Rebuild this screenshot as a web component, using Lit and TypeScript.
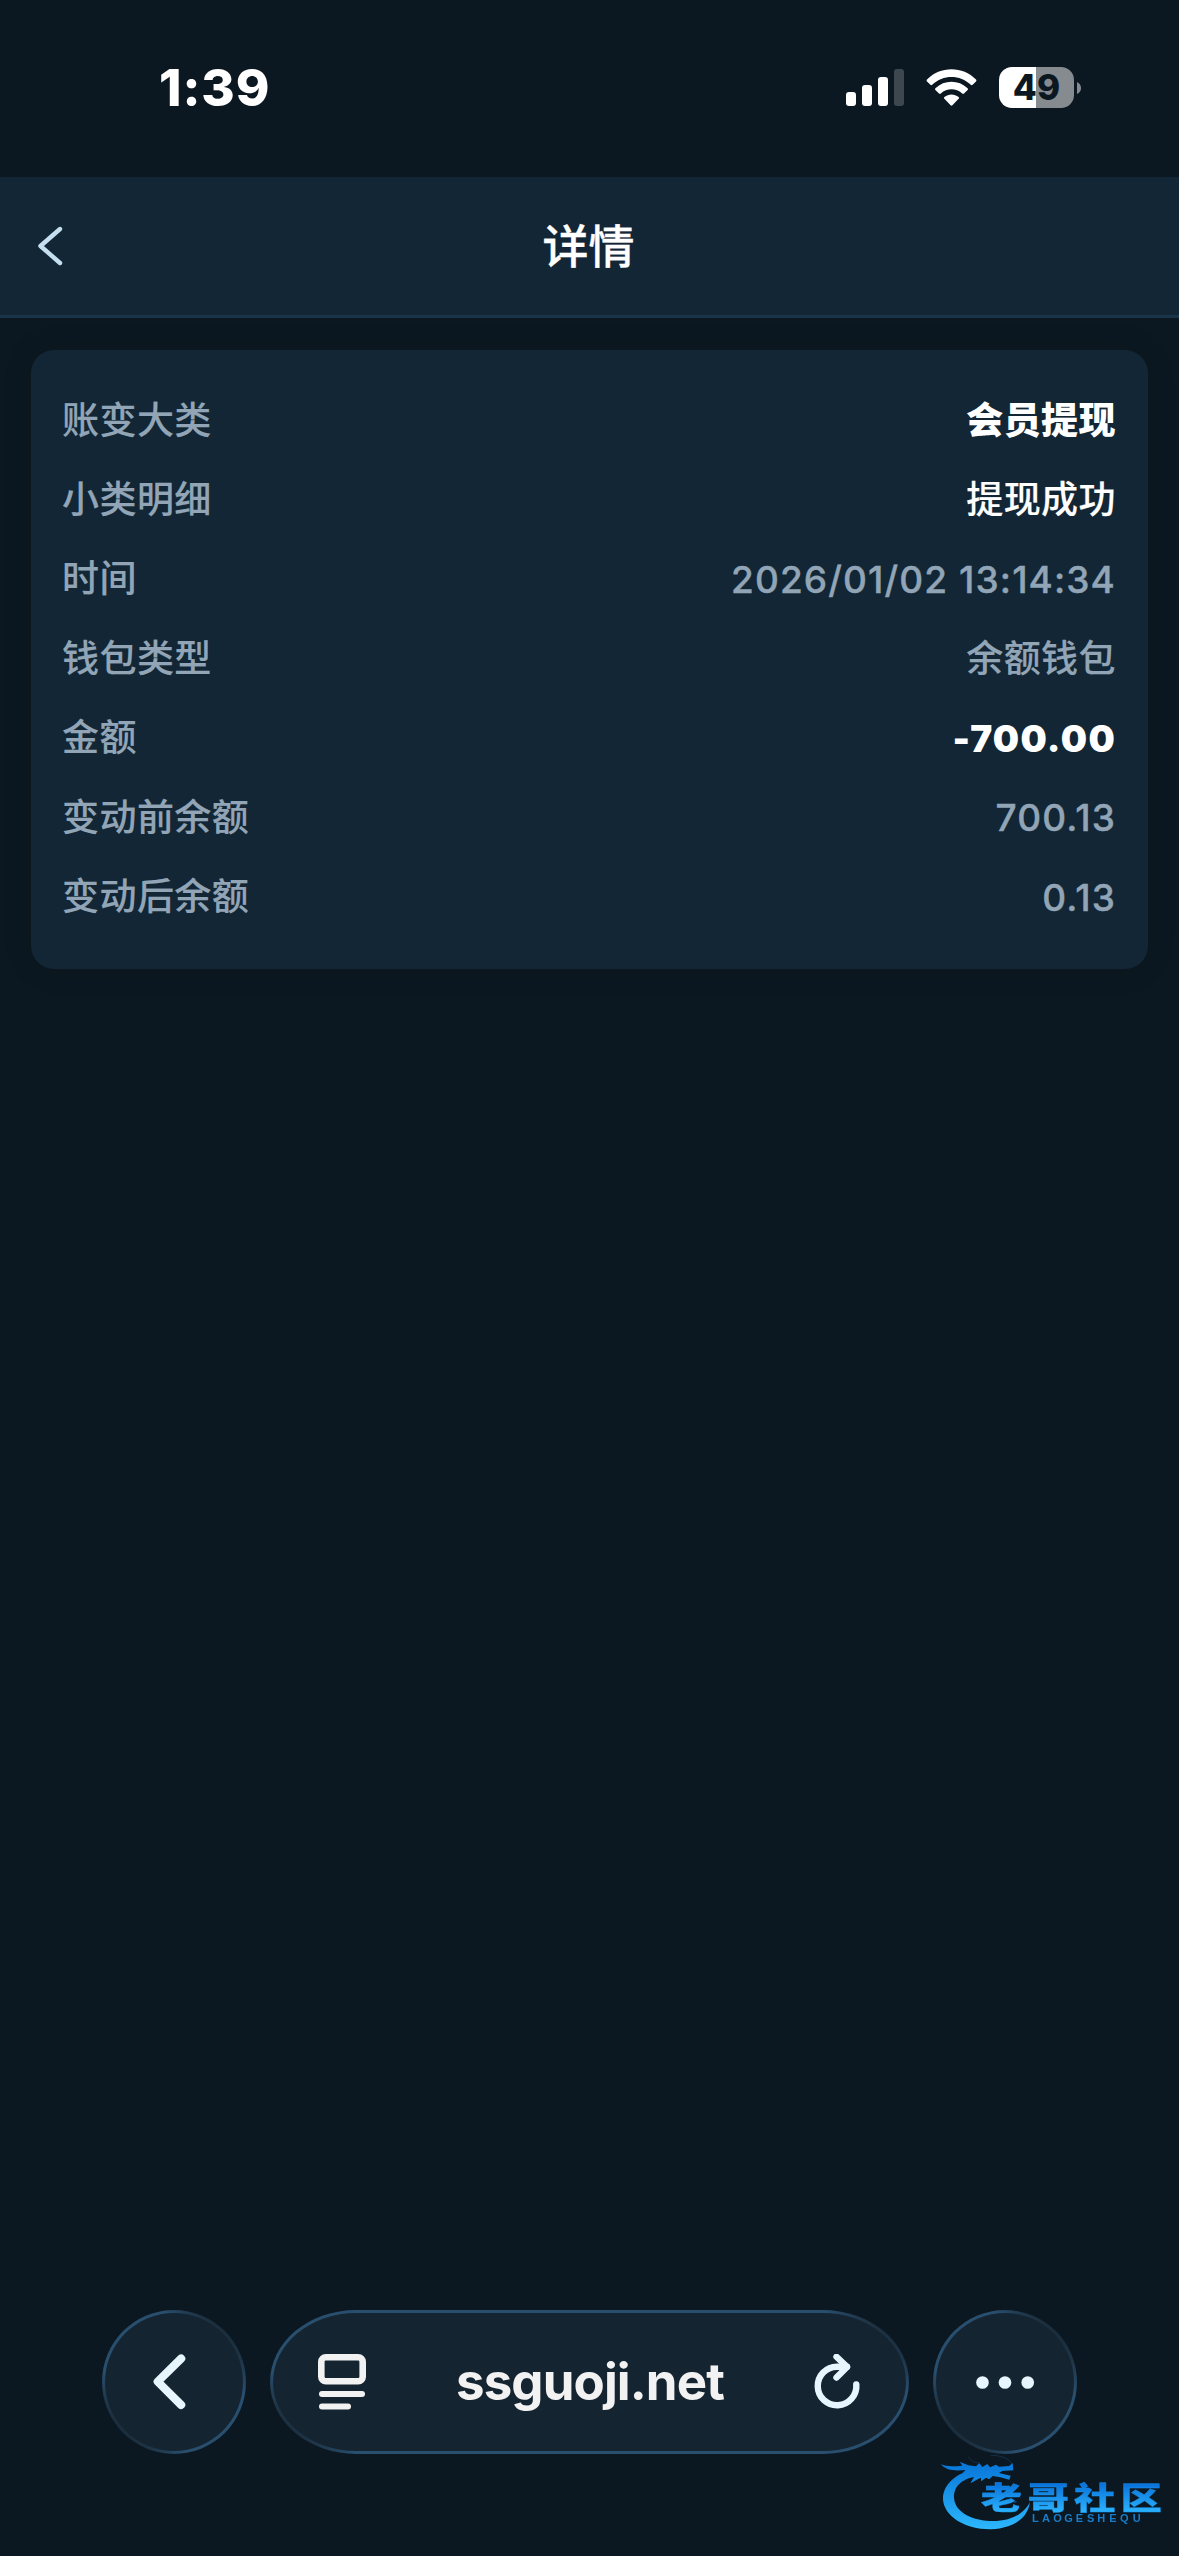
import { LitElement, html, css } from 'lit';
import { customElement, property } from 'lit/decorators.js';
import { classMap } from 'lit/directives/class-map.js';

interface DetailItem {
  label: string;
  value: string;
  tone?: 'strong' | 'plain';
}

const ITEMS: DetailItem[] = [
  { label: '账变大类', value: '会员提现', tone: 'strong' },
  { label: '小类明细', value: '提现成功', tone: 'plain' },
  { label: '时间', value: '2026/01/02 13:14:34' },
  { label: '钱包类型', value: '余额钱包' },
  { label: '金额', value: '-700.00', tone: 'strong' },
  { label: '变动前余额', value: '700.13' },
  { label: '变动后余额', value: '0.13' },
];

// Phone status bar: clock, signal, wifi, battery
@customElement('status-bar')
export class StatusBar extends LitElement {
  @property({ type: String }) time: string = '';
  @property({ type: Number }) battery: number = 0;

  static styles = css`
    :host {
      display: flex;
      justify-content: space-between;
      align-items: center;
      box-sizing: border-box;
      height: 177px;
      padding: 0 98px 2px 159px;
      color: #fff;
    }
    .time {
      font-size: 51px;
      font-weight: 800;
      line-height: 60px;
      letter-spacing: 0.9px;
    }
    .icons {
      display: flex;
      align-items: center;
    }
    .wifi {
      margin-left: 22px;
    }
    .battery {
      display: flex;
      align-items: center;
      gap: 3px;
      margin-left: 22px;
    }
    .cell {
      width: 75px;
      height: 41px;
      border-radius: 13px;
      text-align: center;
      font-size: 35px;
      font-weight: 800;
      line-height: 41px;
      color: #0c1821;
    }
  `;

  render() {
    return html`
      <span class="time">${this.time}</span>
      <div class="icons">
        <svg width="58" height="37" viewBox="0 0 58 37" fill="#fff">
          <rect x="0" y="23" width="10" height="14" rx="3" />
          <rect x="16" y="16" width="10" height="21" rx="3" />
          <rect x="32" y="8" width="10" height="29" rx="3" />
          <rect x="48" y="0" width="10" height="37" rx="3" fill="#3d4750" />
        </svg>
        <svg class="wifi" width="51" height="37" viewBox="0 0 51 37" fill="#fff">
          <path d="M1 10.6C14-3.2 37-3.2 50 10.6q.8.9 0 1.8l-3.400 3.400q-.9.8-1.800 0C34 5.300 17 5.300 6.200 15.800q-.9.8-1.800 0L1 12.400q-.8-.9 0-1.800Z" />
          <path d="M9.400 19.200c9-8.600 23.200-8.600 32.200 0q.9.9 0 1.800l-3.600 3.500q-.9.800-1.800 0c-6.100-5.600-15.300-5.600-21.400 0q-.9.800-1.800 0L9.400 21q-.9-.9 0-1.800Z" />
          <path d="M18.400 28c4.200-3.500 10-3.500 14.200 0q1 .9 0 1.800l-6.200 6.400q-.9.900-1.800 0l-6.200-6.400q-1-.9 0-1.800Z" />
        </svg>
        <div class="battery">
          <div
            class="cell"
            style="background: linear-gradient(90deg, #fff ${this.battery}%, #868b90 ${this.battery}%)"
          >${this.battery}</div>
          <svg width="4" height="12" viewBox="0 0 4 12">
            <path d="M0 0Q4 2 4 6T0 12Z" fill="#868b90" />
          </svg>
        </div>
      </div>
    `;
  }
}

// Page title with back arrow
@customElement('nav-header')
export class NavHeader extends LitElement {
  @property({ type: String }) heading: string = '';

  static styles = css`
    :host {
      display: grid;
      grid-template-columns: 100px 1fr 102px;
      align-items: center;
      box-sizing: border-box;
      height: 141px;
      border-bottom: 3px solid #1a344a;
      background: #132635;
    }
    .back {
      margin-left: 36px;
      display: block;
    }
    .title {
      text-align: center;
      font-size: 46px;
      font-weight: 500;
      line-height: 60px;
      color: #fff;
      -webkit-text-stroke: 0.3px currentColor;
    }
  `;

  render() {
    return html`
      <svg class="back" width="28" height="42" viewBox="0 0 28 42">
        <path d="M24 4 4.500 21 24 38" fill="none" stroke="#c5dff1" stroke-width="4.400" stroke-linecap="round" stroke-linejoin="round" />
      </svg>
      <span class="title">${this.heading}</span>
    `;
  }
}

@customElement('detail-card')
export class DetailCard extends LitElement {
  @property({ attribute: false }) items: DetailItem[] = [];

  static styles = css`
    :host {
      display: block;
      box-sizing: border-box;
      height: 619px;
      margin: 32px 31px 0;
      padding: 31px 32px 31px 31px;
      border-radius: 23px;
      background: #132635;
      box-shadow: 0 0 30px rgba(0, 0, 0, 0.12);
    }
    .row {
      display: flex;
      justify-content: space-between;
      align-items: center;
      height: 79.4px;
      font-size: 37px;
      font-weight: 500;
      line-height: 54px;
      letter-spacing: 0.45px;
      color: #91a5b6;
      -webkit-text-stroke: 0.15px currentColor;
    }
    .number {
      padding-top: 1px;
      letter-spacing: 1.1px;
      -webkit-text-stroke: 0.4px currentColor;
    }
    .plain {
      color: #fff;
    }
    .strong {
      font-weight: 800;
      color: #fff;
      -webkit-text-stroke: 0;
    }
    .number.strong {
      font-weight: 900;
      letter-spacing: 1.3px;
    }
  `;

  render() {
    return html`
      ${this.items.map((item) => {
        const classes = {
          number: /^[-\d]/.test(item.value),
          strong: item.tone === 'strong',
          plain: item.tone === 'plain',
        };
        return html`
          <div class="row">
            <span>${item.label}</span>
            <span class="${classMap(classes)}">${item.value}</span>
          </div>
        `;
      })}
    `;
  }
}

// Floating browser controls
@customElement('browser-bar')
export class BrowserBar extends LitElement {
  @property({ type: String }) host: string = '';

  static styles = css`
    :host {
      display: flex;
      justify-content: center;
      gap: 24px;
      padding: 0 102px 102px 102px;
    }
    .glass {
      display: flex;
      align-items: center;
      justify-content: center;
      box-sizing: border-box;
      width: 144px;
      height: 144px;
      border: 3px solid transparent;
      border-radius: 72px;
      background:
        linear-gradient(#152431, #152431) padding-box,
        linear-gradient(225deg, #1b2e3d 32px, #294f6f 60px, #294f6f calc(100% - 60px), #1b2e3d calc(100% - 32px)) border-box;
    }
    .address {
      flex: 1;
      justify-content: space-between;
      padding: 0 44px 0 45px;
      border-radius: 86px / 72px;
    }
    .host {
      font-size: 51px;
      font-weight: 700;
      line-height: 60px;
      letter-spacing: -0.9px;
      color: #f2f2f2;
    }
  `;

  render() {
    return html`
      <div class="glass">
        <svg width="144" height="144" viewBox="0 0 144 144">
          <path d="M79.500 47.500 55 71.700 79.500 96" fill="none" stroke="#e7f5ff" stroke-width="8.500" stroke-linecap="round" stroke-linejoin="round" />
        </svg>
      </div>
      <div class="glass address">
        <svg width="48" height="56" viewBox="0 0 48 56" fill="#f2f2f2">
          <rect x="3.300" y="3.300" width="41.400" height="24" rx="4.500" fill="none" stroke="#f2f2f2" stroke-width="6.600" />
          <rect x="1" y="37" width="46" height="6" rx="3" />
          <rect x="1" y="49.500" width="32" height="6" rx="3" />
        </svg>
        <span class="host">${this.host}</span>
        <svg width="48" height="56" viewBox="0 0 48 56" fill="none" stroke="#e7f5ff" stroke-width="6.400" stroke-linecap="round" stroke-linejoin="round">
          <path d="M42.300 30.500A19.300 19.300 0 1 1 23 12.700H33" />
          <path d="M22.500 2.800 33 12.900 22.500 23.500" />
        </svg>
      </div>
      <div class="glass">
        <svg width="144" height="144" viewBox="0 0 144 144" fill="#e7f5ff">
          <circle cx="48.500" cy="72.500" r="6.600" />
          <circle cx="72" cy="72.500" r="6.600" />
          <circle cx="95.700" cy="72.500" r="6.600" />
        </svg>
      </div>
    `;
  }
}

// Community logo laid over the bottom right corner
@customElement('corner-mark')
export class CornerMark extends LitElement {
  static styles = css`
    :host {
      position: absolute;
      right: 16px;
      bottom: 24px;
      filter: blur(0.6px);
    }
    svg {
      display: block;
    }
    .name {
      font-family: 'Noto Sans CJK SC', sans-serif;
      font-size: 98px;
      font-weight: 900;
      stroke: #1993ec;
      stroke-width: 1px;
    }
    .latin {
      font-family: 'Liberation Sans', sans-serif;
      font-size: 33px;
      font-weight: 700;
    }
  `;

  render() {
    return html`
      <svg width="223" height="77" viewBox="120 495 669 231">
        <defs>
          <linearGradient id="ring" gradientUnits="userSpaceOnUse" x1="0" y1="520" x2="0" y2="715">
            <stop offset="0" stop-color="#0876d8" />
            <stop offset="1" stop-color="#2cb6fb" />
          </linearGradient>
          <linearGradient id="ink" x1="0" y1="0.250" x2="0" y2="0.850">
            <stop offset="0" stop-color="#0a74dc" />
            <stop offset="1" stop-color="#2bb2fb" />
          </linearGradient>
        </defs>
        <g fill="url(#ring)">
          <path d="M215 541C160 553 128 590 129 628C132 680 196 719 273 718C335 714 382 690 390 636C370 676 325 695 270 693C207 690 163 662 162 622C162 592 180 568 232 558Z" />
          <path d="M123 523C142 531 163 529 187 527L179 515L205 526L228 529L238 519L247 531L262 522L270 532L288 524L297 530L327 528L338 519L340 541L307 543L297 549L332 557L328 569L301 562L278 558L268 568L258 563L244 574L242 563L211 580L222 561L200 563L212 546L187 549L197 540C170 542 139 544 123 523Z" />
          <path d="M206 500Q214 519 240 519M270 495Q326 498 336 522" fill="none" stroke="#153d60" stroke-width="2" />
        </g>
        <g class="name" fill="url(#ink)" transform="translate(0 657) scale(1.270 0.940)">
          <text x="191 301 411 521" y="0">老哥社区</text>
        </g>
        <path d="M307 650Q350 642 373 604" fill="none" stroke="#0c1821" stroke-width="3" />
        <text class="latin" fill="#1a7cc6" y="697" x="396 426 460 493 527 561 592 628 660 698">LAOGESHEQU</text>
      </svg>
    `;
  }
}

@customElement('app-root')
export class AppRoot extends LitElement {
  static styles = css`
    :host {
      display: flex;
      flex-direction: column;
      position: relative;
      width: 1179px;
      height: 2556px;
      overflow: hidden;
      background: #0c1821;
      font-family: Inter, 'Noto Sans CJK SC', sans-serif;
    }
    .content {
      flex: 1;
    }
  `;

  render() {
    return html`
      <status-bar time="1:39" battery="49"></status-bar>
      <nav-header heading="详情"></nav-header>
      <main class="content">
        <detail-card .items=${ITEMS}></detail-card>
      </main>
      <browser-bar host="ssguoji.net"></browser-bar>
      <corner-mark></corner-mark>
    `;
  }
}
